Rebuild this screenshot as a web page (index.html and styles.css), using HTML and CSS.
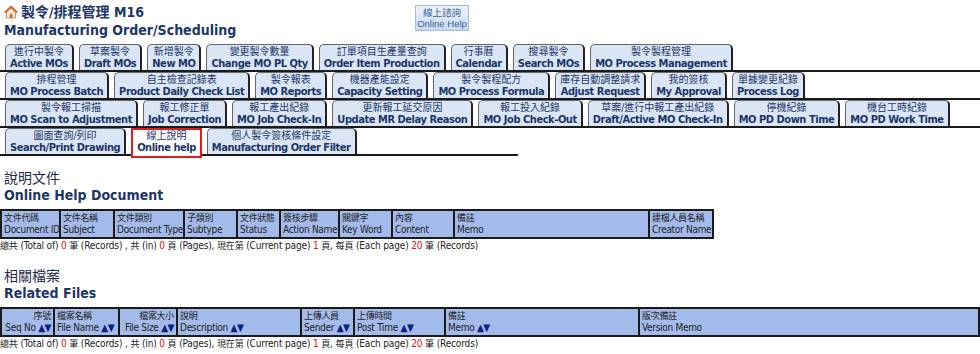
FILE: index.html
```html
<!DOCTYPE html>
<html lang="zh-Hant">
<head>
    <meta charset="UTF-8">
    <meta name="viewport" content="width=device-width, initial-scale=1.0">
    <title>製令/排程管理 M16</title>
    <link rel="stylesheet" href="styles.css">
</head>
<body>
    <!-- Page header -->
    <header class="page-head">
        <div class="title">
            <h1>
                <svg class="home-icon" width="14" height="14" viewBox="0 0 14 14">
                    <path d="M2.5 7 V13 H11.5 V7 L7 2.8 Z" fill="#f7ecd6" stroke="#b07a4a" stroke-width="0.8"/>
                    <path d="M0.8 7.6 L7 1.6 L13.2 7.6" fill="none" stroke="#e2611f" stroke-width="2" stroke-linejoin="round"/>
                    <rect x="5.8" y="8.8" width="2.6" height="4.2" fill="#c9662c"/>
                </svg>
                <span>製令/排程管理 M16</span>
            </h1>
            <h2>Manufacturing Order/Scheduling</h2>
        </div>
        <a href="#" class="help-btn">
            <span>線上諮詢</span>
            <span>Online Help</span>
        </a>
    </header>

    <!-- Function tabs -->
    <nav class="tabs">
        <div class="tab-row">
            <a href="#" class="tab"><span class="zh">進行中製令</span><span class="en">Active MOs</span></a>
            <a href="#" class="tab"><span class="zh">草案製令</span><span class="en">Draft MOs</span></a>
            <a href="#" class="tab"><span class="zh">新增製令</span><span class="en">New MO</span></a>
            <a href="#" class="tab"><span class="zh">變更製令數量</span><span class="en">Change MO PL Qty</span></a>
            <a href="#" class="tab"><span class="zh">訂單項目生產量查詢</span><span class="en">Order Item Production</span></a>
            <a href="#" class="tab"><span class="zh">行事曆</span><span class="en">Calendar</span></a>
            <a href="#" class="tab"><span class="zh">搜尋製令</span><span class="en">Search MOs</span></a>
            <a href="#" class="tab"><span class="zh">製令製程管理</span><span class="en">MO Process Management</span></a>
        </div>
        <div class="tab-row">
            <a href="#" class="tab"><span class="zh">排程管理</span><span class="en">MO Process Batch</span></a>
            <a href="#" class="tab"><span class="zh">自主檢查記錄表</span><span class="en">Product Daily Check List</span></a>
            <a href="#" class="tab"><span class="zh">製令報表</span><span class="en">MO Reports</span></a>
            <a href="#" class="tab"><span class="zh">機器產能設定</span><span class="en">Capacity Setting</span></a>
            <a href="#" class="tab"><span class="zh">製令製程配方</span><span class="en">MO Process Formula</span></a>
            <a href="#" class="tab"><span class="zh">庫存自動調整請求</span><span class="en">Adjust Request</span></a>
            <a href="#" class="tab"><span class="zh">我的簽核</span><span class="en">My Approval</span></a>
            <a href="#" class="tab"><span class="zh">單據變更紀錄</span><span class="en">Process Log</span></a>
        </div>
        <div class="tab-row">
            <a href="#" class="tab"><span class="zh">製令報工掃描</span><span class="en">MO Scan to Adjustment</span></a>
            <a href="#" class="tab"><span class="zh">報工修正單</span><span class="en">Job Correction</span></a>
            <a href="#" class="tab"><span class="zh">報工產出紀錄</span><span class="en">MO Job Check-In</span></a>
            <a href="#" class="tab"><span class="zh">更新報工延交原因</span><span class="en">Update MR Delay Reason</span></a>
            <a href="#" class="tab"><span class="zh">報工投入紀錄</span><span class="en">MO Job Check-Out</span></a>
            <a href="#" class="tab"><span class="zh">草案/進行中報工產出紀錄</span><span class="en">Draft/Active MO Check-In</span></a>
            <a href="#" class="tab"><span class="zh">停機紀錄</span><span class="en">MO PD Down Time</span></a>
            <a href="#" class="tab"><span class="zh">機台工時紀錄</span><span class="en">MO PD Work Time</span></a>
        </div>
        <div class="tab-row last">
            <a href="#" class="tab"><span class="zh">圖面查詢/列印</span><span class="en">Search/Print Drawing</span></a>
            <a href="#" class="tab active"><span class="zh">線上說明</span><span class="en">Online help</span></a>
            <a href="#" class="tab"><span class="zh">個人製令簽核條件設定</span><span class="en">Manufacturing Order Filter</span></a>
        </div>
    </nav>

    <!-- Online help documents -->
    <section class="section">
        <h3 class="section-title"><span class="zh">說明文件</span><span class="en">Online Help Document</span></h3>
        <table class="grid doc-table">
            <colgroup>
                <col class="w59"><col class="w54"><col class="w70"><col class="w53"><col class="w43">
                <col class="w59"><col class="w53"><col class="w62"><col class="w195"><col class="w64">
            </colgroup>
            <tr>
                <th><span class="zh">文件代碼</span>Document ID</th>
                <th><span class="zh">文件名稱</span>Subject</th>
                <th><span class="zh">文件類別</span>Document Type</th>
                <th><span class="zh">子類別</span>Subtype</th>
                <th><span class="zh">文件狀態</span>Status</th>
                <th><span class="zh">簽核步驟</span>Action Name</th>
                <th><span class="zh">關鍵字</span>Key Word</th>
                <th><span class="zh">內容</span>Content</th>
                <th><span class="zh">備註</span>Memo</th>
                <th><span class="zh">建檔人員名稱</span>Creator Name</th>
            </tr>
        </table>
        <p class="pager"><span class="zh">總共</span> (Total of) <span class="num">0</span> <span class="zh">筆</span> (Records) , <span class="zh">共</span> (in) <span class="num">0</span> <span class="zh">頁</span> (Pages), <span class="zh">現在第</span> (Current page) <span class="num">1</span> <span class="zh">頁</span>, <span class="zh">每頁</span> (Each page) <span class="num">20</span> <span class="zh">筆</span> (Records)</p>
    </section>

    <!-- Related files -->
    <section class="section">
        <h3 class="section-title"><span class="zh">相關檔案</span><span class="en">Related Files</span></h3>
        <table class="grid file-table">
            <colgroup>
                <col class="w53"><col class="w65"><col class="w58"><col class="w124">
                <col class="w53"><col class="w91"><col class="w194"><col>
            </colgroup>
            <tr>
                <th class="num-col"><span class="zh">序號</span>Seq No <span class="sort">▲▼</span></th>
                <th><span class="zh">檔案名稱</span>File Name <span class="sort">▲▼</span></th>
                <th class="num-col"><span class="zh">檔案大小</span>File Size <span class="sort">▲▼</span></th>
                <th><span class="zh">說明</span>Description <span class="sort">▲▼</span></th>
                <th><span class="zh">上傳人員</span>Sender <span class="sort">▲▼</span></th>
                <th><span class="zh">上傳時間</span>Post Time <span class="sort">▲▼</span></th>
                <th><span class="zh">備註</span>Memo <span class="sort">▲▼</span></th>
                <th><span class="zh">版次備註</span>Version Memo</th>
            </tr>
        </table>
        <p class="pager"><span class="zh">總共</span> (Total of) <span class="num">0</span> <span class="zh">筆</span> (Records) , <span class="zh">共</span> (in) <span class="num">0</span> <span class="zh">頁</span> (Pages), <span class="zh">現在第</span> (Current page) <span class="num">1</span> <span class="zh">頁</span>, <span class="zh">每頁</span> (Each page) <span class="num">20</span> <span class="zh">筆</span> (Records)</p>
    </section>
</body>
</html>
```

FILE: styles.css
```css
:root {
    --navy: #1b3668;
    --tab-bg: #dae6f5;
    --head-bg: #a2bbeb;
    --line: #1a1a1a;
}

body {
    margin: 0;
    font-family: "DejaVu Sans Condensed", "Noto Sans CJK TC", sans-serif;
    color: #222;
    background: #fff;
}

/* header */
.page-head {
    display: flex;
    align-items: flex-start;
    padding: 3px 0 0 4px;
    height: 41px;
    box-sizing: border-box;
}

.title {
    width: 411px;
}

.title h1,
.title h2 {
    margin: 0;
    font-size: 14px;
    line-height: 18px;
    color: var(--navy);
}

.title h1 {
    display: flex;
    align-items: center;
    gap: 3px;
}

.home-icon {
    flex: none;
}

.help-btn {
    margin-top: 2px;
    width: 54px;
    height: 26px;
    box-sizing: border-box;
    display: flex;
    flex-direction: column;
    justify-content: center;
    border: 1px solid #a9bdd8;
    background: linear-gradient(#eef3fa, #c9d9ee);
    font-family: "Liberation Sans", "Noto Sans CJK TC", sans-serif;
    font-size: 9.5px;
    line-height: 11px;
    color: #3463a6;
    text-align: center;
    text-decoration: none;
    white-space: nowrap;
}

/* tabs */
.tabs {
    margin-top: 3px;
}

.tab-row {
    display: flex;
    align-items: flex-start;
    gap: 5px;
    padding-left: 5px;
    border-bottom: 2px solid var(--line);
}

.tab-row.last {
    width: 513px;
}

.tab {
    display: block;
    padding: 1px 4px 0;
    border: 1px solid #666;
    border-right: 2px solid #222;
    border-bottom: none;
    border-radius: 5px 5px 0 0;
    background: var(--tab-bg);
    color: var(--navy);
    text-align: center;
    text-decoration: none;
    white-space: nowrap;
    line-height: 12px;
}

.tab .zh {
    display: block;
    font-size: 10px;
}

.tab .en {
    display: block;
    font-size: 11px;
    font-weight: bold;
    letter-spacing: -0.45px;
}

.tab.active {
    position: relative;
    height: 30px;
    margin-bottom: -4px;
    box-sizing: border-box;
    border: 2px solid #e31b1b;
    border-radius: 0;
    background: #fff;
    padding-top: 0;
}

/* sections */
.section {
    margin-top: 14px;
}

.section + .section {
    margin-top: 16px;
}

.section-title {
    margin: 0 0 5px;
    padding-left: 4px;
}

.section-title .zh {
    display: block;
    font-size: 14px;
    font-weight: normal;
    line-height: 17px;
    color: #1e2b48;
}

.section-title .en {
    display: block;
    font-size: 14px;
    font-weight: bold;
    line-height: 17px;
    color: var(--navy);
}

.grid {
    border-collapse: collapse;
    table-layout: fixed;
    font-size: 10px;
}

.doc-table {
    width: 712px;
}

.file-table {
    width: 100%;
}

.grid th {
    padding: 1px 2px;
    border: 2px solid var(--line);
    background: var(--head-bg);
    color: #222;
    font-weight: normal;
    text-align: left;
    vertical-align: bottom;
    line-height: 12px;
    letter-spacing: -0.3px;
    white-space: nowrap;
    overflow: hidden;
}

.grid th .zh {
    display: block;
    font-size: 9px;
}

.grid th.num-col {
    text-align: right;
}

.sort {
    color: #0b2080;
    letter-spacing: -0.5px;
}

.w43 { width: 43px; }
.w53 { width: 53px; }
.w54 { width: 54px; }
.w58 { width: 58px; }
.w59 { width: 59px; }
.w62 { width: 62px; }
.w64 { width: 64px; }
.w65 { width: 65px; }
.w70 { width: 70px; }
.w91 { width: 91px; }
.w124 { width: 124px; }
.w194 { width: 194px; }
.w195 { width: 195px; }

.pager {
    margin: 1px 0 0;
    font-size: 10px;
    line-height: 12px;
    letter-spacing: -0.15px;
    color: #222;
}

.pager .zh {
    font-size: 9px;
}

.pager .num {
    color: #e01010;
}
```
